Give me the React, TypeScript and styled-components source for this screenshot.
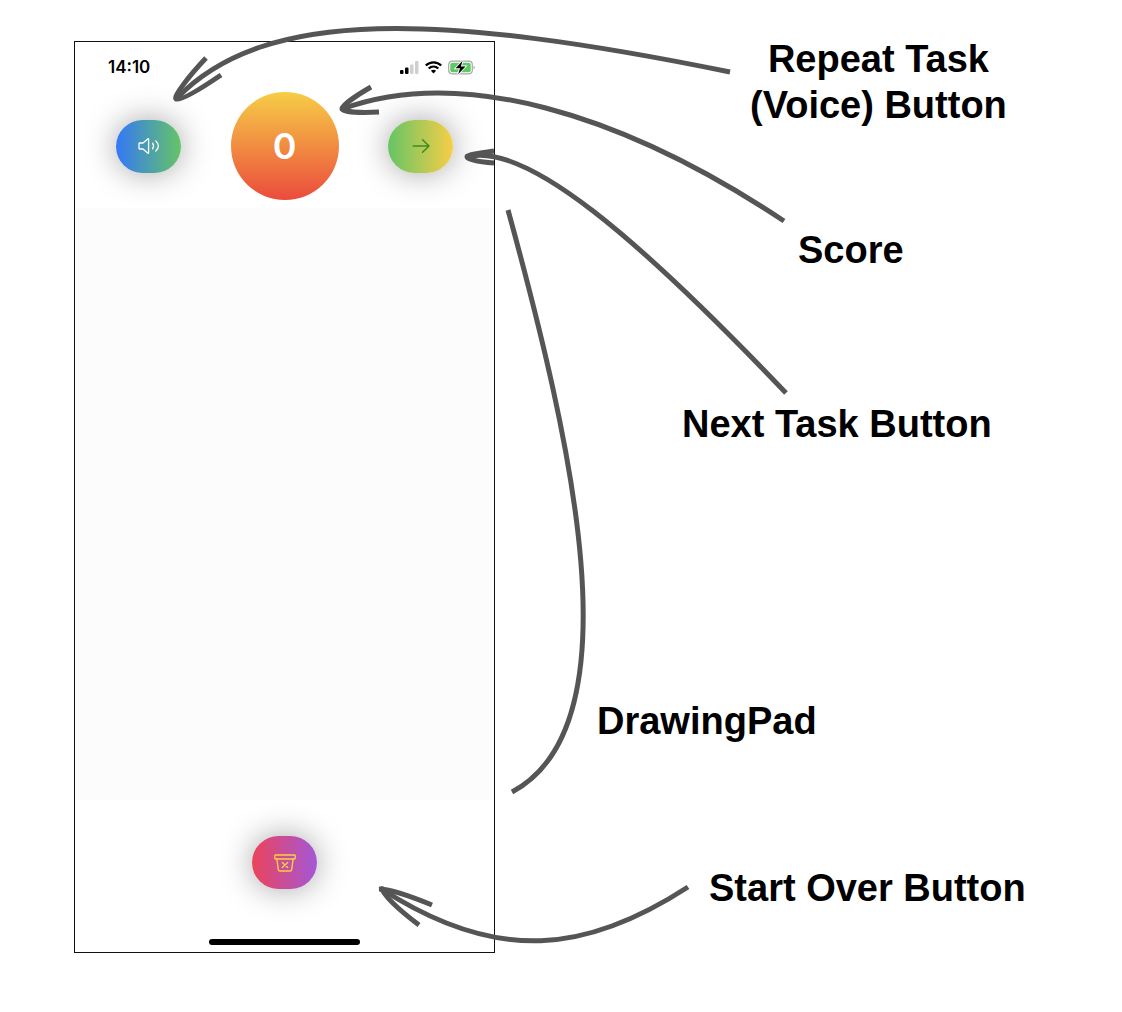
import React from "react";
import styled, { createGlobalStyle } from "styled-components";

const GlobalStyle = createGlobalStyle`
  *, *::before, *::after { box-sizing: border-box; }
  body { margin: 0; background: #ffffff; }
`;

const Diagram = styled.main`
  position: relative;
  min-height: 100vh;
  padding: 41px 74px 59px;
  font-family: "Liberation Sans", Arial, sans-serif;
  color: #000000;
`;

const Phone = styled.section`
  display: flex;
  flex-direction: column;
  width: 421px;
  border: 1px solid #111111;
  font-family: Inter, "Liberation Sans", sans-serif;
`;

const StatusBar = styled.header`
  display: flex;
  align-items: center;
  justify-content: space-between;
  height: 50px;
  padding: 0 19px 0 33px;
`;

const Clock = styled.time`
  font-size: 17px;
  line-height: 20px;
  font-weight: 600;
`;

const StatusIcons = styled.div`
  display: flex;
  align-items: center;
  gap: 6px;

  svg { display: block; }
`;

const Toolbar = styled.div`
  display: flex;
  align-items: center;
  justify-content: space-between;
  padding: 0 41px 8px;
`;

const Score = styled.output`
  display: flex;
  align-items: center;
  justify-content: center;
  width: 108px;
  height: 108px;
  border-radius: 50%;
  background: linear-gradient(180deg, #f6cd46 0%, #eb4b3c 100%);
  color: #ffffff;
  font-size: 36px;
  line-height: 44px;
  font-weight: 600;
`;

const PillButton = styled.button<{ $from: string; $to: string; $ink: string }>`
  display: flex;
  align-items: center;
  justify-content: center;
  width: 65px;
  height: 53px;
  padding: 0;
  border: 0;
  border-radius: 27px;
  background: linear-gradient(90deg, ${(p) => p.$from}, ${(p) => p.$to});
  box-shadow: 0 0 32px rgba(0, 0, 0, 0.36);
  color: ${(p) => p.$ink};
  cursor: pointer;

  svg {
    display: block;
    fill: none;
    stroke: currentColor;
    stroke-linecap: round;
    stroke-linejoin: round;
  }
`;

const DrawingPad = styled.canvas`
  display: block;
  width: 100%;
  height: 592px;
  background: #fcfcfc;
`;

const Footer = styled.footer`
  display: flex;
  flex-direction: column;
  align-items: center;
  gap: 50px;
  padding: 36px 0 7px;
`;

const HomeIndicator = styled.div`
  width: 151px;
  height: 6px;
  border-radius: 3px;
  background: #000000;
`;

const Arrows = styled.svg`
  position: absolute;
  top: 0;
  left: 0;
  fill: none;
  stroke: #555555;
  stroke-width: 5;
  pointer-events: none;
`;

const Callout = styled.p<{ $x: number; $y: number }>`
  position: absolute;
  left: ${(p) => p.$x}px;
  top: ${(p) => p.$y}px;
  margin: 0;
  font-size: 38px;
  line-height: 46px;
  font-weight: 700;
  text-align: center;
  white-space: nowrap;
`;

const SignalIcon = () => (
  <svg width="19" height="13" viewBox="0 0 19 13" aria-hidden="true">
    <rect x="0" y="9" width="3.500" height="4" rx="1" />
    <rect x="5" y="6.500" width="3.500" height="6.500" rx="1" />
    <rect x="10" y="3.500" width="3.500" height="9.500" rx="1" fill="#cfcfcf" />
    <rect x="15" y="0" width="3.500" height="13" rx="1" fill="#cfcfcf" />
  </svg>
);

const WifiIcon = () => (
  <svg width="17" height="13" viewBox="0 0 17 13" fill="none" stroke="#000" strokeWidth="2.3" aria-hidden="true">
    <path d="M.8 4.500C5.200.2 11.800.2 16.200 4.500" />
    <path d="M3.700 7.500C6.500 4.900 10.500 4.900 13.300 7.500" />
    <path d="M8.500 12.500L5.900 9.800C7.400 8.500 9.600 8.500 11.100 9.800Z" fill="#000" stroke="none" />
  </svg>
);

const BatteryIcon = () => (
  <svg width="27" height="15" viewBox="0 0 27 15" aria-hidden="true">
    <rect x=".7" y="1.200" width="23.600" height="12.600" rx="3.500" fill="none" stroke="#a6a6a6" strokeWidth="1.200" />
    <rect x="2.300" y="2.700" width="20.400" height="9.600" rx="2" fill="#5fc965" />
    <path d="M25.600 5.700C27.200 6.400 27.200 8.600 25.600 9.300Z" fill="#a6a6a6" />
    <path d="M14.500.8L7.600 8.300H12L10.200 14.200L17.500 6.500H12.900Z" stroke="#fff" strokeWidth="1.800" paintOrder="stroke" />
  </svg>
);

const SpeakerIcon = () => (
  <svg width="22" height="18" viewBox="0 0 22 18" strokeWidth="1.300" aria-hidden="true">
    <path d="M1.700 6H5L9.700 1.900Q10.600 1.200 10.600 2.200V15.800Q10.600 16.800 9.700 16.100L5 12H1.700Q1 12 1 11.300V6.700Q1 6 1.700 6Z" />
    <path d="M14.600 6.200C15.800 8 15.800 10 14.600 11.800" />
    <path d="M17.800 4C21.200 7 21.200 11 17.800 14" />
  </svg>
);

const ArrowIcon = () => (
  <svg width="18" height="16" viewBox="0 0 18 16" strokeWidth="1.500" aria-hidden="true">
    <path d="M1.200 8H17M10.600 1.700L17 8L10.600 14.300" />
  </svg>
);

const BinIcon = () => (
  <svg width="22" height="18" viewBox="0 0 22 18" strokeWidth="1.400" aria-hidden="true">
    <rect x=".8" y="1" width="20.400" height="4" rx=".7" />
    <path d="M2.900 5L4.300 15.600Q4.500 17 5.900 17H16.100Q17.500 17 17.700 15.600L19.100 5" />
    <path d="M8.300 8.400L13.700 13.400M13.700 8.400L8.300 13.400" />
  </svg>
);

const arrowPaths = [
  // repeat task
  "M730 72C440 13 265 7 177 98",
  "M206 58C188 77 173 97 176 99C180 101 196 92 221 75",
  // score
  "M784 221C620 112 460 66 342 109",
  "M371 87C357 95 341 106 342 109C344 112 360 113 379 112",
  // next task
  "M786 393C640 240 525 140 466 157",
  "M494 151C480 153 466 155 467 157C468 160 480 162 494 163",
  // drawing pad
  "M508 210C571 440 638 725 512 792",
  // start over
  "M688 887C588 952 498 965 380 888",
  "M432 905C410 896 390 889 379 889",
  "M381 887C384 896 395 907 419 925",
];

const callouts = [
  { x: 750, y: 36, lines: ["Repeat Task", "(Voice) Button"] },
  { x: 798, y: 227, lines: ["Score"] },
  { x: 682, y: 401, lines: ["Next Task Button"] },
  { x: 597, y: 698, lines: ["DrawingPad"] },
  { x: 709, y: 865, lines: ["Start Over Button"] },
];

export default function App() {
  return (
    <>
      <GlobalStyle />
      <Diagram>
        <Phone aria-label="App screen">
          <StatusBar>
            <Clock>14:10</Clock>
            <StatusIcons>
              <SignalIcon />
              <WifiIcon />
              <BatteryIcon />
            </StatusIcons>
          </StatusBar>
          <Toolbar>
            <PillButton type="button" aria-label="Repeat task" $from="#3478f6" $to="#65c466" $ink="#ffffff">
              <SpeakerIcon />
            </PillButton>
            <Score aria-label="Score">0</Score>
            <PillButton type="button" aria-label="Next task" $from="#65c466" $to="#f7ce46" $ink="#3f8a20">
              <ArrowIcon />
            </PillButton>
          </Toolbar>
          <DrawingPad aria-label="Drawing pad" />
          <Footer>
            <PillButton type="button" aria-label="Start over" $from="#eb445a" $to="#a357d7" $ink="#f7ce46">
              <BinIcon />
            </PillButton>
            <HomeIndicator />
          </Footer>
        </Phone>

        <Arrows width="800" height="960" viewBox="0 0 800 960" aria-hidden="true">
          {arrowPaths.map((d) => (
            <path key={d} d={d} />
          ))}
        </Arrows>

        {callouts.map(({ x, y, lines }) => (
          <Callout key={lines[0]} $x={x} $y={y}>
            {lines.map((line, i) => (
              <React.Fragment key={line}>
                {i > 0 && <br />}
                {line}
              </React.Fragment>
            ))}
          </Callout>
        ))}
      </Diagram>
    </>
  );
}
